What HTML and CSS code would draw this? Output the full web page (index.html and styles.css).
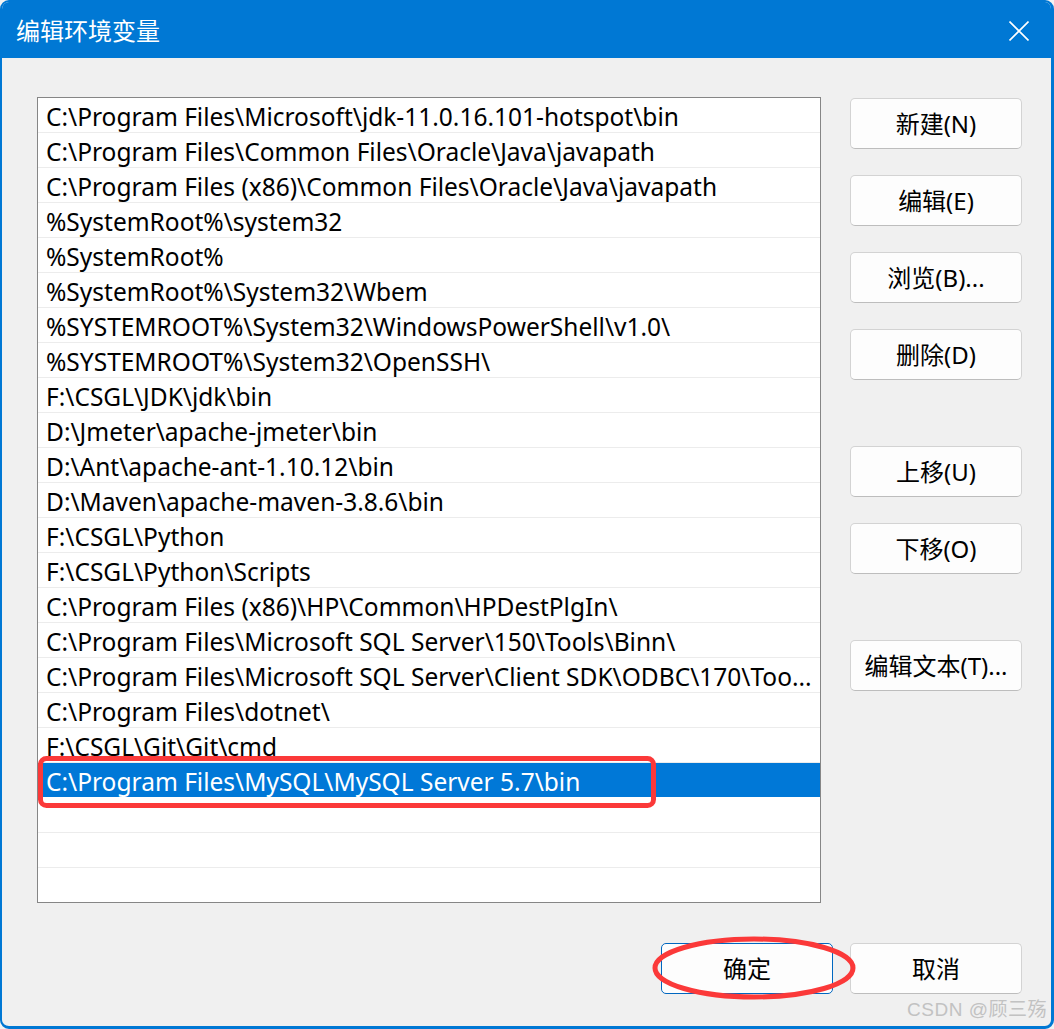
FILE: index.html
```html
<!DOCTYPE html>
<html lang="zh-CN">
<head>
<meta charset="utf-8">
<title>编辑环境变量</title>
<link rel="stylesheet" href="styles.css">
</head>
<body>
<div class="window">
  <div class="titlebar">
    <span class="title">编辑环境变量</span>
    <svg class="close" width="20" height="20" viewBox="0 0 20 20" aria-label="关闭">
      <path d="M0.5 0.5 L19.5 19.5 M19.5 0.5 L0.5 19.5" stroke="#ffffff" stroke-width="1.6" fill="none"/>
    </svg>
  </div>
  <div class="content">
    <div class="main">
      <div class="list">
        <div class="row">C:\Program Files\Microsoft\jdk-11.0.16.101-hotspot\bin</div>
        <div class="row">C:\Program Files\Common Files\Oracle\Java\javapath</div>
        <div class="row">C:\Program Files (x86)\Common Files\Oracle\Java\javapath</div>
        <div class="row">%SystemRoot%\system32</div>
        <div class="row">%SystemRoot%</div>
        <div class="row">%SystemRoot%\System32\Wbem</div>
        <div class="row">%SYSTEMROOT%\System32\WindowsPowerShell\v1.0\</div>
        <div class="row">%SYSTEMROOT%\System32\OpenSSH\</div>
        <div class="row">F:\CSGL\JDK\jdk\bin</div>
        <div class="row">D:\Jmeter\apache-jmeter\bin</div>
        <div class="row">D:\Ant\apache-ant-1.10.12\bin</div>
        <div class="row">D:\Maven\apache-maven-3.8.6\bin</div>
        <div class="row">F:\CSGL\Python</div>
        <div class="row">F:\CSGL\Python\Scripts</div>
        <div class="row">C:\Program Files (x86)\HP\Common\HPDestPlgIn\</div>
        <div class="row">C:\Program Files\Microsoft SQL Server\150\Tools\Binn\</div>
        <div class="row">C:\Program Files\Microsoft SQL Server\Client SDK\ODBC\170\Too...</div>
        <div class="row">C:\Program Files\dotnet\</div>
        <div class="row">F:\CSGL\Git\Git\cmd</div>
        <div class="row selected">C:\Program Files\MySQL\MySQL Server 5.7\bin</div>
        <div class="row"></div>
        <div class="row"></div>
        <div class="row last"></div>
      </div>
      <div class="side">
        <div class="group">
          <button class="btn">新建(N)</button>
          <button class="btn">编辑(E)</button>
          <button class="btn">浏览(B)...</button>
          <button class="btn">删除(D)</button>
        </div>
        <div class="group">
          <button class="btn">上移(U)</button>
          <button class="btn">下移(O)</button>
        </div>
        <div class="group">
          <button class="btn">编辑文本(T)...</button>
        </div>
      </div>
    </div>
    <div class="footer">
      <button class="btn default">确定</button>
      <button class="btn">取消</button>
    </div>
    <div class="watermark">CSDN @顾三殇</div>
  </div>
  <svg class="mark-rect" width="620" height="54" viewBox="0 0 620 54">
    <rect x="2.5" y="2.5" width="613" height="47" rx="6" ry="6" fill="none" stroke="#fb3939" stroke-width="5"/>
  </svg>
  <svg class="mark-ellipse" width="210" height="70" viewBox="0 0 210 70">
    <ellipse cx="103" cy="33" rx="99" ry="29" fill="none" stroke="#fb3939" stroke-width="5"/>
  </svg>
</div>
</body>
</html>
```
FILE: styles.css
```css
html, body {
  margin: 0;
  padding: 0;
  background: #f3f3f3;
}
body {
  width: 1054px;
  height: 1029px;
  overflow: hidden;
  font-family: "Noto Sans", "Noto Sans CJK SC", sans-serif;
}
.window {
  position: relative;
  box-sizing: border-box;
  width: 1054px;
  height: 1029px;
  border: 2px solid #0078d4;
  border-bottom-width: 3px;
  border-right-width: 3px;
  border-radius: 9px;
  background: #f0f0f0;
  overflow: hidden;
  display: flex;
  flex-direction: column;
}
.titlebar {
  height: 56px;
  background: #0078d4;
  display: flex;
  align-items: center;
  justify-content: space-between;
  padding: 0 22px 0 14px;
  flex: none;
}
.title {
  color: #ffffff;
  font-family: "Noto Sans CJK SC", sans-serif;
  font-size: 24px;
  line-height: 1;
}
.close {
  display: block;
  margin-top: 1px;
}
.content {
  position: relative;
  flex: 1;
  padding: 39px 29px 0 35px;
}
.main {
  display: flex;
  align-items: flex-start;
  gap: 29px;
}
.list {
  box-sizing: border-box;
  width: 784px;
  height: 806px;
  border: 1px solid #868686;
  background: #ffffff;
  overflow: hidden;
}
.row {
  box-sizing: border-box;
  height: 35px;
  border-bottom: 1px solid #ececec;
  padding: 3px 3px 0 8px;
  font-size: 24.5px;
  line-height: 31px;
  color: #000000;
  white-space: nowrap;
  overflow: hidden;
  text-overflow: ellipsis;
}
.row.last {
  border-bottom: none;
}
.row.selected {
  background: #0078d7;
  color: #ffffff;
  border-bottom-color: #ffffff;
}
.side {
  display: flex;
  flex-direction: column;
  gap: 66px;
  padding-top: 1px;
}
.group {
  display: flex;
  flex-direction: column;
  gap: 26px;
}
.btn {
  box-sizing: border-box;
  width: 172px;
  height: 51px;
  border: 1px solid #d3d3d3;
  border-bottom-color: #bdbdbd;
  border-radius: 5px;
  background: #fdfdfd;
  font-family: "Noto Sans", "Noto Sans CJK SC", sans-serif;
  font-size: 24px;
  color: #000000;
  padding: 1px 0 0;
  line-height: 1;
}
.footer {
  display: flex;
  justify-content: flex-end;
  gap: 17px;
  margin-top: 40px;
}
.btn.default {
  border: 1px solid #0067c0;
}
.watermark {
  position: absolute;
  right: 4px;
  bottom: 5px;
  font-family: "Liberation Sans", "Noto Sans CJK SC", sans-serif;
  font-size: 19px;
  color: #c2c2c2;
  letter-spacing: 0.5px;
}
.mark-rect {
  position: absolute;
  left: 36px;
  top: 754px;
}
.mark-ellipse {
  position: absolute;
  left: 649px;
  top: 933px;
}
```
